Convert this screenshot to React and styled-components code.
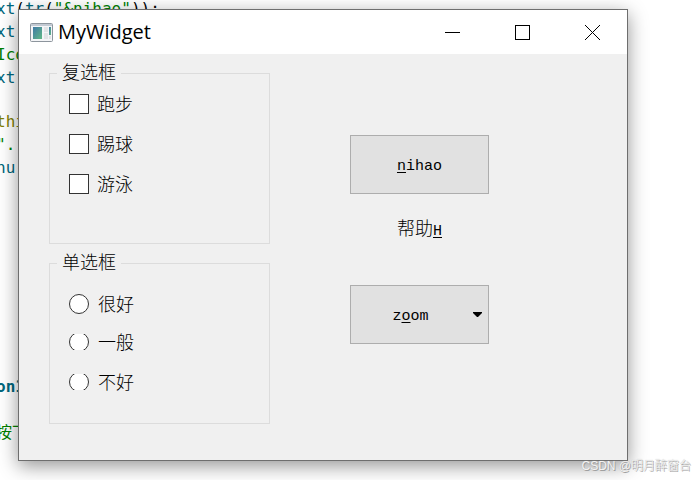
// App.jsx
import React, { useState } from "react";
import styled, { createGlobalStyle } from "styled-components";

const GlobalStyle = createGlobalStyle`
  * {
    box-sizing: border-box;
  }

  body {
    margin: 0;
    background-color: #ffffff;
    overflow: hidden;
  }

  button,
  input {
    font: inherit;
    color: inherit;
  }
`;

const Desktop = styled.div`
  position: relative;
  min-height: 100vh;
  padding: 9px 71px 19px 18px;
  overflow: hidden;
  font-family: "Liberation Mono", "Noto Sans CJK SC", monospace;
`;

const Editor = styled.pre`
  position: absolute;
  inset: 0;
  margin: 0;
  overflow: hidden;
  font-family: "DejaVu Sans Mono", "Noto Sans CJK SC", monospace;
  font-size: 16px;
  line-height: 23px;
`;

const CodeBlock = styled.div`
  height: ${(props) => props.$height}px;
  margin-top: ${(props) => props.$shift || 0}px;
  margin-left: -4px;
`;

const Token = styled.span`
  color: ${(props) => props.$color};
  font-weight: ${(props) => (props.$bold ? "bold" : "normal")};
`;

const Window = styled.main`
  position: relative;
  background-color: #f0f0f0;
  border: 1px solid #6e6e6e;
  box-shadow: 0 5px 18px rgba(0, 0, 0, 0.42);
`;

const TitleBar = styled.header`
  display: flex;
  align-items: center;
  height: 44px;
  padding-left: 11px;
  gap: 5px;
  background-color: #ffffff;
`;

const Title = styled.h1`
  flex: 1;
  margin: 0;
  font-family: "Open Sans", "Noto Sans", sans-serif;
  font-size: 20px;
  font-weight: normal;
  line-height: 44px;
`;

const WindowButtons = styled.div`
  display: flex;
`;

const WindowButton = styled.button`
  display: flex;
  align-items: center;
  justify-content: center;
  width: 70px;
  height: 44px;
  padding: 0;
  border: none;
  background: none;
`;

const Body = styled.div`
  display: flex;
  gap: 80px;
  padding: 9px 30px 36px;
`;

const Groups = styled.div`
  display: flex;
  flex-direction: column;
  gap: 9px;
  flex: 0 0 221px;
`;

const GroupBox = styled.fieldset`
  display: grid;
  grid-auto-rows: 20px;
  row-gap: 20px;
  align-items: start;
  margin: 0;
  padding: ${(props) => props.$top}px 19px ${(props) => props.$bottom}px;
  border: 1px solid #dcdcdc;
`;

const GroupTitle = styled.legend`
  height: 20px;
  margin-left: -12px;
  padding: 0 5px;
  font-size: 18px;
  font-weight: 300;
  line-height: 22px;
`;

const Option = styled.label`
  display: flex;
  align-items: center;
  gap: ${(props) => props.$gap}px;
  height: ${(props) => (props.$short ? 16 : 20)}px;
  font-size: 18px;
  font-weight: 300;
`;

const OptionText = styled.span`
  padding-top: 3px;
  line-height: 20px;
`;

const CheckBox = styled.input`
  appearance: none;
  flex: none;
  width: 20px;
  height: 20px;
  margin: 0;
  border: 1px solid #333333;
  background-color: #ffffff;

  &:checked {
    box-shadow: inset 0 0 0 4px #ffffff;
    background-color: #333333;
  }
`;

const Radio = styled(CheckBox)`
  border-radius: 50%;
  clip-path: ${(props) => (props.$short ? "inset(2px 0)" : "none")};
`;

const Actions = styled.div`
  display: flex;
  flex-direction: column;
  align-items: center;
  flex: 0 0 139px;
  padding-top: 72px;
`;

const PushButton = styled.button`
  position: relative;
  width: 100%;
  height: 59px;
  padding: 4px ${(props) => (props.$menu ? 18 : 0)}px 0 0;
  border: 1px solid #adadad;
  background-color: #e1e1e1;
  font-size: 15px;
`;

const HelpButton = styled.button`
  height: 24px;
  margin: 24px 0 43px;
  padding: 0;
  border: none;
  background: none;
  font-size: 15px;
  line-height: 24px;
`;

const HelpText = styled.span`
  font-size: 18px;
  font-weight: 300;
`;

const Mnemonic = styled.u`
  text-underline-offset: 2px;
  text-decoration-thickness: 1px;
`;

const MenuArrow = styled.svg`
  position: absolute;
  top: 26px;
  right: 6px;
`;

const Watermark = styled.div`
  position: absolute;
  right: 8px;
  bottom: 5px;
  font-family: "Liberation Sans", "Noto Sans CJK SC", sans-serif;
  font-size: 12px;
  font-weight: 300;
  line-height: 18px;
  color: #f4f4f4;
  text-shadow: 1px 1px 0 #a0a0a0, 0 0 1px #b0b0b0;
`;

const teal = "#00677c";
const green = "#008000";
const olive = "#808000";

const sports = ["跑步", "踢球", "游泳"];
const ratings = ["很好", "一般", "不好"];

function WindowIcon() {
  return (
    <svg width="23" height="19" viewBox="0 0 23 19" aria-hidden="true">
      <defs>
        <linearGradient id="pane" x1="0" y1="0" x2="1" y2="1">
          <stop offset="0" stopColor="#3f79a6" />
          <stop offset="1" stopColor="#62b986" />
        </linearGradient>
      </defs>
      <rect x="0.5" y="0.5" width="22" height="18" rx="1" fill="#f4f5f7" stroke="#8d959d" />
      <rect x="1" y="1" width="21" height="2" fill="#c3cad3" />
      <rect x="3" y="4" width="9" height="12" fill="url(#pane)" />
      <rect x="14" y="4" width="4" height="5" fill="#e2e4e6" />
      <rect x="14" y="10" width="4" height="6" fill="#e2e4e6" />
      <rect x="19" y="4" width="2" height="8" fill="url(#pane)" />
      <rect x="19" y="13" width="2" height="3" fill="#e2e4e6" />
    </svg>
  );
}

function App() {
  const [rating, setRating] = useState("");

  return (
    <Desktop>
      <GlobalStyle />
      <Editor>
        <CodeBlock $height={115} $shift={-3}>
          <Token $color={teal}>xt</Token>(<Token $color={teal}>tr</Token>(
          <Token $color={green}>"&amp;nihao"</Token>));{"\n"}
          <Token $color={teal}>xt</Token>({"\n"}
          <Token $color={green}>Icon</Token>{"\n"}
          <Token $color={teal}>xt</Token>(
        </CodeBlock>
        <CodeBlock $height={265} $shift={-2}>
          <Token $color={olive}>this</Token>{"\n"}
          <Token $color={green}>"...</Token>{"\n"}
          <Token $color={teal}>nu</Token>(
        </CodeBlock>
        <CodeBlock $height={92}>
          <Token $color={teal} $bold>on1</Token>{"\n\n"}
          <Token $color={green}>按下</Token>
        </CodeBlock>
      </Editor>

      <Window>
        <TitleBar>
          <WindowIcon />
          <Title>MyWidget</Title>
          <WindowButtons>
            <WindowButton type="button" aria-label="Minimize">
              <svg width="15" height="15" viewBox="0 0 15 15">
                <path d="M0 7.5H15" stroke="#000" />
              </svg>
            </WindowButton>
            <WindowButton type="button" aria-label="Maximize">
              <svg width="15" height="15" viewBox="0 0 15 15">
                <rect x="0.5" y="0.5" width="14" height="14" fill="none" stroke="#000" />
              </svg>
            </WindowButton>
            <WindowButton type="button" aria-label="Close">
              <svg width="15" height="15" viewBox="0 0 15 15">
                <path d="M0 0L15 15M15 0L0 15" stroke="#000" />
              </svg>
            </WindowButton>
          </WindowButtons>
        </TitleBar>

        <Body>
          <Groups>
            <GroupBox $top={11} $bottom={49}>
              <GroupTitle>复选框</GroupTitle>
              {sports.map((name) => (
                <Option key={name} $gap={8}>
                  <CheckBox type="checkbox" />
                  <OptionText>{name}</OptionText>
                </Option>
              ))}
            </GroupBox>
            <GroupBox $top={21} $bottom={29}>
              <GroupTitle>单选框</GroupTitle>
              {ratings.map((name, index) => (
                <Option key={name} $gap={9} $short={index > 0}>
                  <Radio
                    type="radio"
                    name="rating"
                    $short={index > 0}
                    checked={rating === name}
                    onChange={() => setRating(name)}
                  />
                  <OptionText>{name}</OptionText>
                </Option>
              ))}
            </GroupBox>
          </Groups>

          <Actions>
            <PushButton type="button">
              <Mnemonic>n</Mnemonic>ihao
            </PushButton>
            <HelpButton type="button">
              <HelpText>帮助</HelpText>
              <Mnemonic>H</Mnemonic>
            </HelpButton>
            <PushButton type="button" $menu aria-haspopup="menu">
              z<Mnemonic>o</Mnemonic>om
              <MenuArrow width="9" height="5" viewBox="0 0 9 5">
                <path d="M0 0H9V1L5 5H4L0 1Z" fill="#000" />
              </MenuArrow>
            </PushButton>
          </Actions>
        </Body>
      </Window>

      <Watermark>CSDN @明月醉窗台</Watermark>
    </Desktop>
  );
}

export default App;
